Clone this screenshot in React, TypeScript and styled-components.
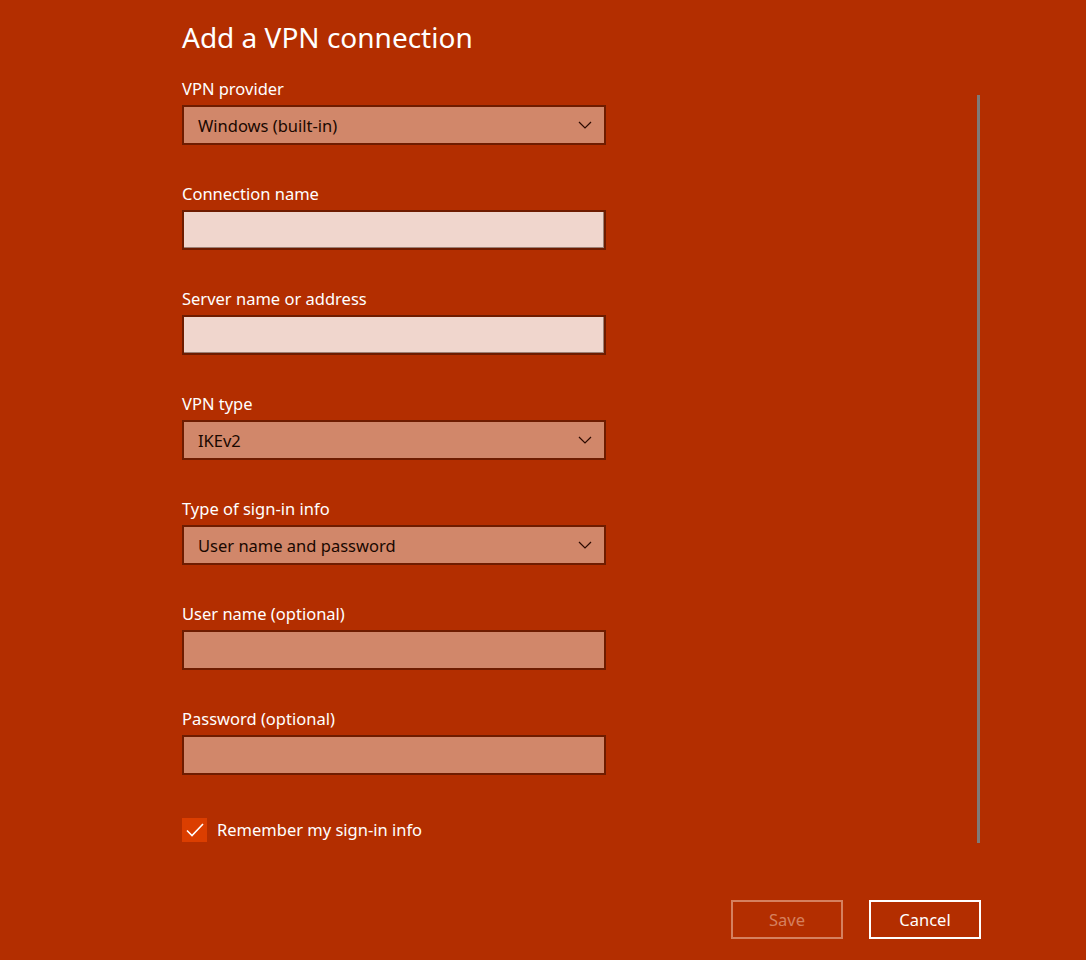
import styled, { createGlobalStyle } from 'styled-components'

const GlobalStyle = createGlobalStyle`
	html, body {
		margin: 0;
		padding: 0;
		background: #b32e00;
	}
	body {
		font-family: 'Noto Sans', 'Open Sans', sans-serif;
		color: #ffffff;
	}
`

type FieldDef = {
	label: string
	kind: 'select' | 'input' | 'dim'
	value?: string
}

const fields: FieldDef[] = [
	{ label: 'VPN provider', kind: 'select', value: 'Windows (built-in)' },
	{ label: 'Connection name', kind: 'input' },
	{ label: 'Server name or address', kind: 'input' },
	{ label: 'VPN type', kind: 'select', value: 'IKEv2' },
	{ label: 'Type of sign-in info', kind: 'select', value: 'User name and password' },
	{ label: 'User name (optional)', kind: 'dim' },
	{ label: 'Password (optional)', kind: 'dim' },
]

function Chevron() {
	return (
		<svg width="14" height="8" viewBox="0 0 14 8" fill="none">
			<path d="M1 1l6 6 6-6" stroke="#2b0a00" strokeWidth="1.2" />
		</svg>
	)
}

function App() {
	return (
		<Page>
			<GlobalStyle />
			<Top>
				<Form>
					<Title>Add a VPN connection</Title>
					{fields.map(f => (
						<Field key={f.label}>
							<Label>{f.label}</Label>
							{f.kind === 'select' ? (
								<Select>
									<span>{f.value}</span>
									<Chevron />
								</Select>
							) : (
								<Input $light={f.kind === 'input'} />
							)}
						</Field>
					))}
					<CheckRow>
						<Check>
							<svg width="18" height="14" viewBox="0 0 18 14" fill="none">
								<path d="M1 7.5l5 5L17 1" stroke="#ffffff" strokeWidth="1.6" />
							</svg>
						</Check>
						<span>Remember my sign-in info</span>
					</CheckRow>
				</Form>
				<Track />
			</Top>
			<Footer>
				<Button $disabled>Save</Button>
				<Button>Cancel</Button>
			</Footer>
		</Page>
	)
}
export default App

const Page = styled.div`
	display: flex;
	flex-direction: column;
	width: 1086px;
	height: 960px;
	background: #b32e00;
	overflow: hidden;
`
const Top = styled.div`
	display: flex;
	align-items: flex-start;
	padding-top: 19px;
`
const Form = styled.div`
	display: flex;
	flex-direction: column;
	margin-left: 182px;
	width: 424px;
`
const Title = styled.h1`
	margin: 0 0 24px 0;
	font-size: 28px;
	font-weight: 400;
	line-height: 36px;
`
const Field = styled.div`
	display: flex;
	flex-direction: column;
	margin-bottom: 39px;
`
const Label = styled.div`
	font-size: 16.5px;
	line-height: 20px;
	margin-bottom: 6px;
`
const Select = styled.div`
	display: flex;
	align-items: center;
	justify-content: space-between;
	box-sizing: border-box;
	height: 40px;
	padding: 0 12px 0 14px;
	background: #d1876a;
	border: 2px solid #6e1c00;
	color: #1a0800;
	font-size: 16.5px;
`
const Input = styled.div<{ $light?: boolean }>`
	box-sizing: border-box;
	height: 40px;
	background: ${({ $light }) => ($light ? '#f0d6cd' : '#d1876a')};
	border: 2px solid #6e1c00;
	box-shadow: ${({ $light }) =>
		$light ? 'inset -1px -1px 0 #9c7f74' : 'none'};
`
const CheckRow = styled.div`
	display: flex;
	align-items: center;
	gap: 10px;
	margin-top: 4px;
	font-size: 16.5px;
	line-height: 24px;
`
const Check = styled.div`
	display: flex;
	align-items: center;
	justify-content: center;
	width: 25px;
	height: 24px;
	background: #db3e00;
`
const Track = styled.div`
	margin-left: auto;
	margin-right: 106px;
	margin-top: 76px;
	width: 3px;
	height: 748px;
	background: #7f7a78;
`
const Footer = styled.div`
	display: flex;
	justify-content: flex-end;
	gap: 26px;
	margin-top: 57px;
	padding-right: 105px;
`
const Button = styled.button<{ $disabled?: boolean }>`
	box-sizing: border-box;
	width: 112px;
	height: 39px;
	background: transparent;
	border: 2px solid ${({ $disabled }) => ($disabled ? '#d5805f' : '#ffffff')};
	color: ${({ $disabled }) => ($disabled ? '#d5805f' : '#ffffff')};
	font-family: 'Noto Sans', 'Open Sans', sans-serif;
	font-size: 16.5px;
	padding: 0;
	cursor: ${({ $disabled }) => ($disabled ? 'default' : 'pointer')};
`
